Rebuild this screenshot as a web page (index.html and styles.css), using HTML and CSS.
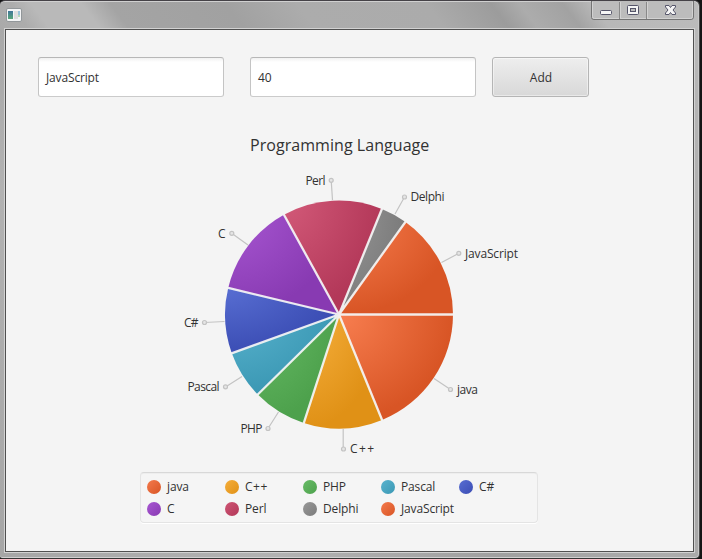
FILE: index.html
```html
<!DOCTYPE html>
<html lang="en">
<head>
<meta charset="utf-8">
<title>Programming Language</title>
<link rel="stylesheet" href="styles.css">
</head>
<body>
<div class="window">
  <header class="titlebar">
    <svg class="app-icon" width="16" height="14" viewBox="0 0 16 14">
      <defs><linearGradient id="ico" x2="0" y2="1"><stop offset="0" stop-color="#3f7599"/><stop offset="1" stop-color="#58a779"/></linearGradient></defs>
      <rect x=".5" y=".5" width="15" height="13" rx="1.5" fill="#f4f5f6" stroke="#92979a"/>
      <rect x="2" y="3" width="5" height="8" fill="url(#ico)"/>
      <rect x="8" y="3" width="4" height="8" fill="#dedfdf"/>
      <rect x="12" y="3" width="2" height="4" fill="#9ac4da"/>
      <rect x="12" y="7" width="2" height="2" fill="#b4d9bb"/>
    </svg>
    <svg class="controls" width="104" height="20" viewBox="590 1 104 20">
      <path d="M591.5 1V17.500Q591.500 19.500 594 19.500H691Q693.500 19.500 693.500 17V1" fill="#bcbcbc" stroke="#747474"/>
      <path d="M592.500 2V16.500Q592.500 18.500 594.500 18.500H690.500Q692.500 18.500 692.500 16.500V2M620.500 2V18M647.500 2V18" fill="none" stroke="#d2d2d2"/>
      <path d="M619.500 2V19M646.500 2V19" stroke="#898989"/>
      <rect x="600.500" y="10.500" width="11" height="4" rx="1" fill="#f5f5f5" stroke="#55556a"/>
      <rect x="627.500" y="5.500" width="11" height="9" rx="1" fill="#f5f5f5" stroke="#55556a"/>
      <rect x="630.500" y="8.500" width="5" height="3" fill="#bcbcbc" stroke="#55556a"/>
      <path d="M665.500 5.500H669L670.500 7.500L672 5.500H675.500V7L673 10L675.500 13V14.500H672L670.500 12.500L669 14.500H665.500V13L668 10L665.500 7Z" fill="#f5f5f5" stroke="#55556a"/>
    </svg>
  </header>
  <main class="client">
    <form class="fields">
      <div class="field name">JavaScript</div>
      <div class="field value">40</div>
      <button class="add" type="button">Add</button>
    </form>
    <h1>Programming Language</h1>
    <svg class="chart" width="687" height="302" viewBox="6 165 687 302">
      <defs>
        <radialGradient id="orange" cx="0" cy="0" r="1"><stop stop-color="#f87e50"/><stop offset="1" stop-color="#d85525"/></radialGradient>
        <radialGradient id="yellow" cx="0" cy="0" r="1"><stop stop-color="#f7b13f"/><stop offset="1" stop-color="#e09116"/></radialGradient>
        <radialGradient id="green" cx="0" cy="0" r="1"><stop stop-color="#68bc67"/><stop offset="1" stop-color="#4da14c"/></radialGradient>
        <radialGradient id="cyan" cx="0" cy="0" r="1"><stop stop-color="#59b3ce"/><stop offset="1" stop-color="#3b98b4"/></radialGradient>
        <radialGradient id="blue" cx="0" cy="0" r="1"><stop stop-color="#586ed2"/><stop offset="1" stop-color="#3b4db4"/></radialGradient>
        <radialGradient id="purple" cx="0" cy="0" r="1"><stop stop-color="#a857d2"/><stop offset="1" stop-color="#883ab2"/></radialGradient>
        <radialGradient id="red" cx="0" cy="0" r="1"><stop stop-color="#d35a79"/><stop offset="1" stop-color="#b33859"/></radialGradient>
        <radialGradient id="gray" cx="0" cy="0" r="1"><stop stop-color="#989898"/><stop offset="1" stop-color="#7b7b7b"/></radialGradient>
      </defs>
      <g>
        <path fill="url(#orange)" d="M339 314.500H453A114 114 0 0 1 382.100 420Z"/>
        <path fill="url(#yellow)" d="M339 314.500L382.100 420A114 114 0 0 1 303.800 422.900Z"/>
        <path fill="url(#green)" d="M339 314.500L303.800 422.900A114 114 0 0 1 257.800 394.500Z"/>
        <path fill="url(#cyan)" d="M339 314.500L257.800 394.500A114 114 0 0 1 231.800 353.300Z"/>
        <path fill="url(#blue)" d="M339 314.500L231.800 353.300A114 114 0 0 1 228.200 287.900Z"/>
        <path fill="url(#purple)" d="M339 314.500L228.200 287.900A114 114 0 0 1 283.900 214.700Z"/>
        <path fill="url(#red)" d="M339 314.500L283.900 214.700A114 114 0 0 1 381.900 208.900Z"/>
        <path fill="url(#gray)" d="M339 314.500L381.900 208.900A114 114 0 0 1 405.500 221.900Z"/>
        <path fill="url(#orange)" d="M339 314.500L405.500 221.900A114 114 0 0 1 453 314.500Z"/>
      </g>
      <path class="separators" d="M339 314.500H454M339 314.500L382.500 421M339 314.500L303.500 423.900M339 314.500L257 395.200M339 314.500L230.800 353.700M339 314.500L227.200 287.700M339 314.500L283.400 213.800M339 314.500L382.300 208M339 314.500L406.100 221"/>
      <g class="leaders">
        <path d="M434 378.500L450.500 389.500M343.200 429V449M278.500 412L268 428.500M242 376.500L225.500 387M224.500 321.500L204.500 322.500M248 245L232 233.500M332.500 200L331.200 180.500M395 214L404.500 197M441.500 262.500L458.500 253.500"/>
        <g><circle cx="450.500" cy="389.500" r="2"/><circle cx="343.500" cy="449" r="2"/><circle cx="268" cy="428.500" r="2"/><circle cx="225.500" cy="386.800" r="2"/><circle cx="204.500" cy="322.500" r="2"/><circle cx="231.800" cy="233.300" r="2"/><circle cx="331.200" cy="180.300" r="2"/><circle cx="404.500" cy="197" r="2"/><circle cx="458.800" cy="253.300" r="2"/></g>
      </g>
      <g class="labels">
        <text x="457" y="394" textLength="21">java</text>
        <text x="350" y="453" textLength="24">C++</text>
        <text x="240.500" y="433" textLength="22">PHP</text>
        <text x="187.500" y="391" textLength="32">Pascal</text>
        <text x="184" y="327" textLength="14.500">C#</text>
        <text x="218" y="238">C</text>
        <text x="305.500" y="185" textLength="20">Perl</text>
        <text x="410.500" y="201" textLength="34">Delphi</text>
        <text x="465" y="258" textLength="53">JavaScript</text>
      </g>
    </svg>
    <ul class="legend">
      <li><i class="dot orange"></i>java</li>
      <li><i class="dot yellow"></i><span class="plus">C++</span></li>
      <li><i class="dot green"></i>PHP</li>
      <li><i class="dot cyan"></i>Pascal</li>
      <li><i class="dot blue"></i>C#</li>
      <li><i class="dot purple"></i>C</li>
      <li><i class="dot red"></i>Perl</li>
      <li><i class="dot gray"></i>Delphi</li>
      <li><i class="dot orange"></i>JavaScript</li>
    </ul>
  </main>
</div>
</body>
</html>
```
FILE: styles.css
```css
* { box-sizing: border-box; }
body {
  margin: 0;
  width: 702px;
  height: 559px;
  overflow: hidden;
  background: #151515;
  font-family: "Open Sans", "Noto Sans", sans-serif;
  font-size: 12px;
  color: #323232;
}
.window {
  width: 700px;
  height: 559px;
  padding: 0 1px 0 0;
  border-top: 1px solid #454247;
  border-right: 1px solid #4a4a4a;
  border-bottom: 1px solid #353535;
  border-radius: 5px 6px 5px 3px;
  box-shadow: inset 0 1px #d0d0d0, inset -1px 0 #c8c8c8, inset 0 -1px #d0d0d0;
  background: linear-gradient(53deg, #a6a6a6, #b2b2b2 25%, #a0a0a0 45%, #acacac 60%, #a3a3a3 70%, #bababa);
}
.titlebar {
  display: flex;
  justify-content: space-between;
  height: 27px;
  margin-top: 1px;
  margin-bottom: -1px;
  padding: 0 4px 0 6px;
  background: linear-gradient(53deg, #aaa, #acacac 4%, #b9b9b9 7%, #b9b9b9 14%, #a4a4a4 18%, #a1a1a1 34%, #acacac 44%, #ababab 62%, #9c9c9c 71%, #acacac 75%, #a2a2a2 81%, #b8b8b8 85%, #bbb);
  border-radius: 5px 5px 0 0;
}
.app-icon { margin: 6px 0 0; }
.controls { margin-top: -1px; }
.client {
  width: 689px;
  height: 523px;
  margin: 1px 0 0 5px;
  border: 1px solid #505050;
  outline: 1px solid #d2d2d2;
  background: #f4f4f4;
  display: flex;
  flex-direction: column;
}
.fields {
  display: flex;
  padding: 27px 0 0 32px;
}
.field, .add {
  height: 40px;
  border: 1px solid #bcbcbc;
  border-radius: 3px;
  font: inherit;
  line-height: 39px;
  color: inherit;
}
.field {
  padding: 0 7px;
  border-color: #b7b7b7 #c4c4c4 #cbcbcb;
  background: linear-gradient(#f1f1f1, #fff 4px);
  letter-spacing: -0.15px;
}
.name { width: 186px; }
.value { width: 226px; margin-left: 26px; }
.add {
  width: 97px;
  margin-left: 16px;
  padding: 0 0 0 1px;
  border-color: #b5b5b5;
  background: linear-gradient(#eee, #d8d8d8);
  box-shadow: inset 0 0 0 1px rgba(255, 255, 255, .45);
}
h1 {
  margin: 36px 0 0 244px;
  height: 32px;
  line-height: 24px;
  font-size: 16px;
  font-weight: 400;
  letter-spacing: .05px;
  white-space: nowrap;
}
.chart { display: block; flex: none; }
.separators { fill: none; stroke: #f4f4f4; stroke-width: 2.3; opacity: .93; }
.leaders { fill: #e5e5e5; stroke: #c3c3c3; stroke-width: 1.2; }
.labels { fill: #323232; }
.legend {
  display: grid;
  grid-template-columns: repeat(5, 78px);
  grid-template-rows: 22px 22px;
  width: 398px;
  height: 51px;
  margin: 5px 0 0 134px;
  padding: 3px 0 0 6px;
  list-style: none;
  border: 1px solid #e4e4e4;
  border-top-color: #d8d8d8;
  border-radius: 4px;
  box-shadow: 0 1px #fff, inset 0 1px #eee;
  background: #f5f5f5;
  letter-spacing: -0.15px;
  line-height: 18px;
}
.legend li { display: flex; align-items: center; gap: 6px; }
.plus { letter-spacing: .5px; }
.dot { width: 14px; height: 14px; border-radius: 50%; }
.orange { background: linear-gradient(135deg, #f47a4c, #d85525); }
.yellow { background: linear-gradient(135deg, #f5ae3b, #e09116); }
.green { background: linear-gradient(135deg, #68bc67, #4da14c); }
.cyan { background: linear-gradient(135deg, #59b3ce, #3b98b4); }
.blue { background: linear-gradient(135deg, #586ed2, #3b4db4); }
.purple { background: linear-gradient(135deg, #a857d2, #883ab2); }
.red { background: linear-gradient(135deg, #ce5574, #b33859); }
.gray { background: linear-gradient(135deg, #989898, #7b7b7b); }
```
